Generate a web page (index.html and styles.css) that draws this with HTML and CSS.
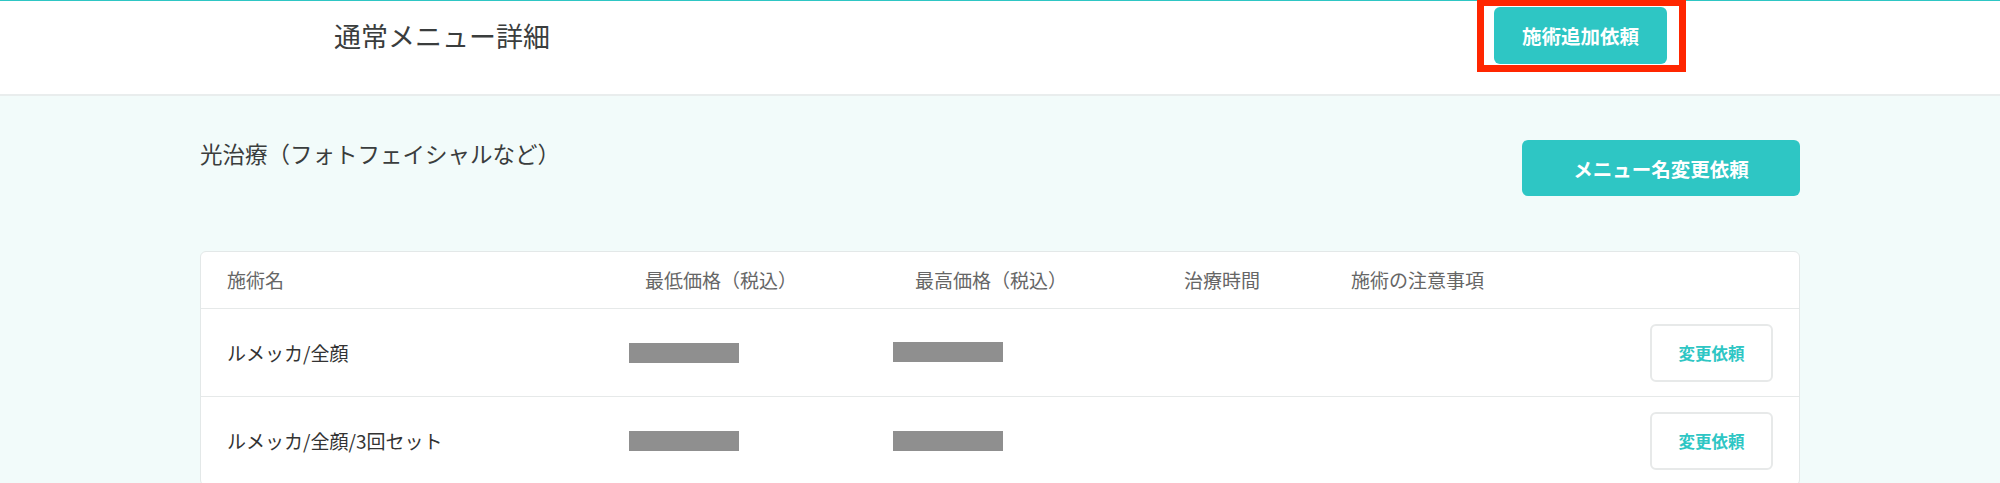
FILE: index.html
```html
<!DOCTYPE html>
<html lang="ja">
<head>
<meta charset="utf-8">
<title>通常メニュー詳細</title>
<link rel="stylesheet" href="styles.css">
</head>
<body>
<header class="topbar">
  <div class="topbar-inner">
    <h1 class="page-title">通常メニュー詳細</h1>
    <div class="btn-wrap">
      <button class="btn btn-primary btn-add">施術追加依頼</button>
      <span class="highlight"></span>
    </div>
  </div>
</header>
<main class="content">
  <div class="section-head">
    <h2 class="section-title">光治療（フォトフェイシャルなど）</h2>
    <button class="btn btn-primary btn-rename">メニュー名変更依頼</button>
  </div>
  <div class="card">
    <div class="row row-head">
      <div class="cell">施術名</div>
      <div class="cell">最低価格（税込）</div>
      <div class="cell">最高価格（税込）</div>
      <div class="cell">治療時間</div>
      <div class="cell">施術の注意事項</div>
    </div>
    <div class="row row-body">
      <div class="cell name">ルメッカ/全顔</div>
      <div class="cell"><span class="redact"></span></div>
      <div class="cell"><span class="redact redact-up"></span></div>
      <div class="cell action"><button class="btn btn-outline">変更依頼</button></div>
    </div>
    <div class="row row-body">
      <div class="cell name">ルメッカ/全顔/3回セット</div>
      <div class="cell"><span class="redact"></span></div>
      <div class="cell"><span class="redact"></span></div>
      <div class="cell action"><button class="btn btn-outline">変更依頼</button></div>
    </div>
  </div>
</main>
</body>
</html>
```
FILE: styles.css
```css
* { box-sizing: border-box; }
html, body { margin: 0; padding: 0; }
body {
  font-family: "Noto Sans CJK JP", "Noto Sans", sans-serif;
  color: #333;
  background: #f2fbfa;
  overflow: hidden;
}
h1, h2 { margin: 0; font-weight: normal; }

.topbar {
  background: #fff;
  border-top: 1px solid #2ec6c4;
  border-bottom: 2px solid #e9eded;
  height: 96px;
}
.topbar-inner {
  margin: 6px 0 0 334px;
  width: 1333px;
  height: 57px;
  display: flex;
  align-items: center;
  justify-content: space-between;
}
.page-title {
  font-size: 27px;
  line-height: 32px;
  color: #3a3d3d;
}
.btn-wrap { position: relative; }
.highlight {
  position: absolute;
  top: -8px;
  left: -17px;
  right: -19px;
  bottom: -8px;
  border: 7px solid #ff2600;
  pointer-events: none;
}

.btn {
  font-family: inherit;
  border: none;
  cursor: pointer;
  padding: 0;
}
.btn-primary {
  background: #2ec6c4;
  color: #fff;
  font-weight: bold;
  font-size: 19.5px;
  border-radius: 6px;
}
.btn-add { width: 173px; height: 57px; }
.btn-rename { width: 278px; height: 56px; }

.content {
  padding: 44px 200px 0 200px;
}
.section-head {
  display: flex;
  justify-content: space-between;
  align-items: flex-start;
}
.section-title {
  font-size: 22.5px;
  line-height: 26px;
  color: #3a3d3d;
}

.card {
  margin-top: 55px;
  background: #fff;
  border: 1px solid #e3e8e8;
  border-radius: 6px;
}
.row {
  display: grid;
  align-items: center;
  padding: 0 26px;
  border-bottom: 1px solid #e6e9e9;
}
.row-head {
  grid-template-columns: 418px 270px 269px 167px 1fr;
  height: 57px;
  font-size: 19px;
  color: #666;
}
.row-body {
  grid-template-columns: 402px 264px 1fr auto;
  height: 88px;
  font-size: 19px;
  color: #333;
}
.cell { line-height: 24px; }
.redact {
  display: block;
  width: 110px;
  height: 20px;
  background: #8f8f8f;
}
.redact-up { margin-top: -2px; }

.btn-outline {
  width: 123px;
  height: 58px;
  background: #fff;
  border: 2px solid #e7e9e9;
  border-radius: 6px;
  color: #2ec6c4;
  font-weight: bold;
  font-size: 16.5px;
}
```
